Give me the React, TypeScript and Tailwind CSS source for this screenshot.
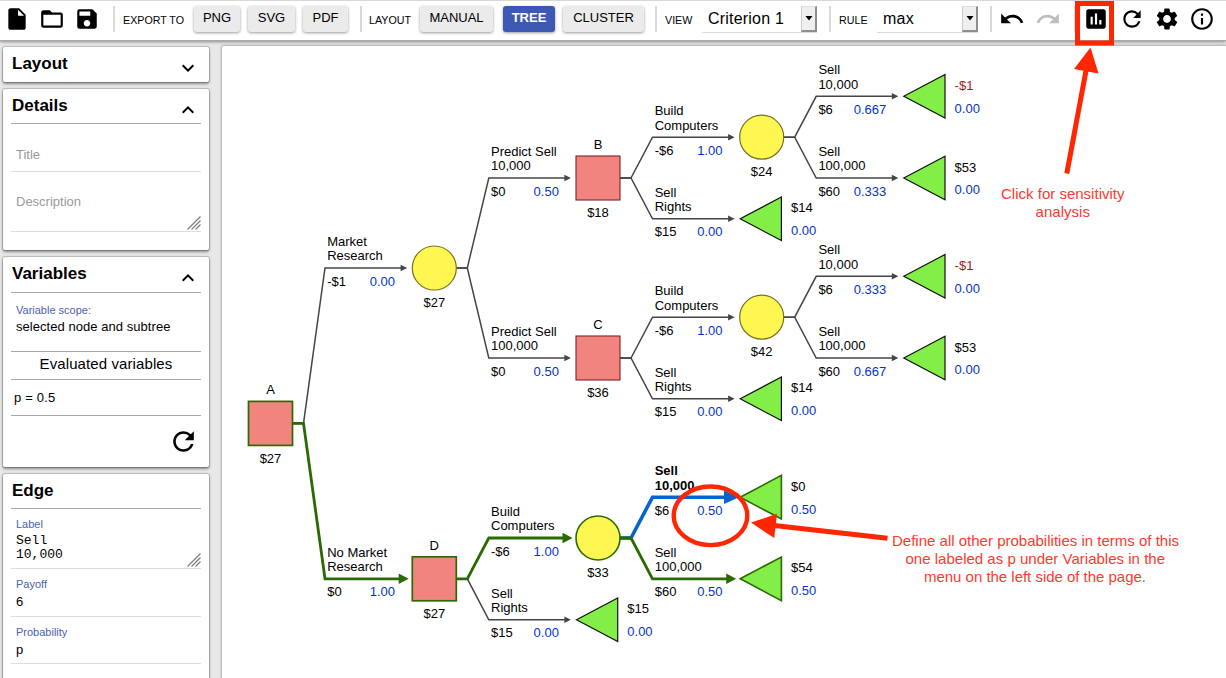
import type { ReactNode } from "react";
import {
  MdAssessment,
  MdExpandLess,
  MdExpandMore,
  MdInfoOutline,
  MdInsertDriveFile,
  MdFolderOpen,
  MdRedo,
  MdRefresh,
  MdSave,
  MdSettings,
  MdUndo,
} from "react-icons/md";

const FONT = "font-['Liberation_Sans',Arial,sans-serif]";

/* ---------- Toolbar ---------- */

function Separator({ className }: { className: string }) {
  return <div className={`h-[26px] w-0.5 shrink-0 bg-[#d9d9d9] ${className}`} />;
}

function ToolLabel({ className, children }: { className: string; children: string }) {
  return (
    <span className={`shrink-0 pt-[3px] text-[10.7px] leading-none whitespace-nowrap ${className}`}>{children}</span>
  );
}

function ToolButton({ className, active, children }: { className: string; active?: boolean; children: string }) {
  return (
    <button
      className={`flex h-[26px] shrink-0 items-center justify-center rounded-[3px] pb-[3px] text-[13px] shadow-[0_1px_3px_rgba(0,0,0,0.4)] ${
        active ? "bg-[#3d59b3] font-bold text-white" : "bg-[#ebebeb] text-black"
      } ${className}`}
    >
      {children}
    </button>
  );
}

function Select({ className, children }: { className: string; children: string }) {
  return (
    <div className={`flex h-[27px] shrink-0 items-stretch justify-between border-b border-[#ddd] ${className}`}>
      <span className="pt-[3px] pl-1.5 text-[16px] leading-[20px] tracking-[0.2px] whitespace-nowrap">{children}</span>
      <span className="flex w-4 items-center justify-center border-t border-r-2 border-b-2 border-l border-t-[#ddd] border-r-[#8e8e8e] border-b-[#8e8e8e] border-l-[#ccc] bg-[#efefef]">
        <svg width="8" height="5" viewBox="0 0 8 5">
          <path d="M0.5 0h7L4 4.6z" fill="#000" />
        </svg>
      </span>
    </div>
  );
}

function Toolbar() {
  return (
    <header className="flex h-[41px] shrink-0 items-center border-t border-b border-t-[#d8d8d8] border-b-[#a9a9a9] bg-white pb-[3px] shadow-[0_1px_3px_rgba(0,0,0,0.4)]">
      <MdInsertDriveFile size={26} className="ml-1 shrink-0" />
      <MdFolderOpen size={26} className="ml-[9px] shrink-0" />
      <MdSave size={26} className="ml-[9px] shrink-0" />
      <Separator className="ml-[13px]" />
      <ToolLabel className="ml-2 w-[63px]">EXPORT TO</ToolLabel>
      <ToolButton className="ml-2 w-[46px]">PNG</ToolButton>
      <ToolButton className="ml-2 w-[47px]">SVG</ToolButton>
      <ToolButton className="ml-2 w-[45px]">PDF</ToolButton>
      <Separator className="ml-3" />
      <ToolLabel className="ml-[7px] w-11">LAYOUT</ToolLabel>
      <ToolButton className="ml-[7px] w-[73px]">MANUAL</ToolButton>
      <ToolButton className="ml-2.5 w-[52px]" active>
        TREE
      </ToolButton>
      <ToolButton className="ml-2 w-[81px]">CLUSTER</ToolButton>
      <Separator className="ml-[11px]" />
      <ToolLabel className="ml-2 w-[29px]">VIEW</ToolLabel>
      <Select className="ml-2 w-[115px]">Criterion 1</Select>
      <Separator className="ml-3" />
      <ToolLabel className="ml-2 w-[30px]">RULE</ToolLabel>
      <Select className="ml-2 w-[101px]">max</Select>
      <Separator className="ml-3" />
      <MdUndo size={26} className="ml-[7px] shrink-0" />
      <MdRedo size={26} className="ml-2.5 shrink-0 text-[#bdbdbd]" />
      <Separator className="ml-[13px]" />
      <MdAssessment size={26} className="ml-[7px] shrink-0" />
      <MdRefresh size={26} className="ml-2.5 shrink-0" />
      <MdSettings size={26} className="ml-[9px] shrink-0" />
      <MdInfoOutline size={26} className="ml-[9px] shrink-0" />
    </header>
  );
}

/* ---------- Sidebar ---------- */

function Card({ className, children }: { className: string; children: ReactNode }) {
  return (
    <section
      className={`w-[206px] shrink-0 rounded-[2px] bg-white px-2 shadow-[0_0_1px_1px_rgba(0,0,0,0.2),0_2px_3px_rgba(0,0,0,0.4)] ${className}`}
    >
      {children}
    </section>
  );
}

function CardTitle({
  icon,
  className = "h-[35px] border-b",
  children,
}: {
  icon?: ReactNode;
  className?: string;
  children: string;
}) {
  return (
    <div className={`flex justify-between border-[#aaa] ${className}`}>
      <h2 className="pt-1.5 pl-px text-[17px] leading-[22px] font-bold">{children}</h2>
      {icon && <span className="pt-[9px] pr-px">{icon}</span>}
    </div>
  );
}

function Grip() {
  return (
    <svg width="14" height="14" viewBox="0 0 14 14" className="mb-px shrink-0" stroke="#777" strokeWidth="1.1">
      <path d="M0.5 13.5L13.5 0.5M4.5 13.5L13.5 4.5M8.5 13.5L13.5 8.5" fill="none" />
    </svg>
  );
}

function Sidebar() {
  return (
    <aside className="flex w-[222px] shrink-0 flex-col gap-[7px] overflow-hidden pt-1.5 pl-[3px]">
      <Card className="h-[35px]">
        <CardTitle className="h-[35px]" icon={<MdExpandMore size={24} />}>
          Layout
        </CardTitle>
      </Card>

      <Card className="h-[161px]">
        <CardTitle icon={<MdExpandLess size={24} />}>Details</CardTitle>
        <div className="h-12 border-b border-[#ddd] pt-[22px] pl-[5px] text-[13px] leading-[18px] text-[#999]">Title</div>
        <div className="flex h-[60px] items-end justify-between border-b border-[#ddd] pl-[5px] text-[13px] text-[#999]">
          <span className="self-start pt-[21px] leading-[18px]">Description</span>
          <Grip />
        </div>
      </Card>

      <Card className="h-[210px]">
        <CardTitle className="h-9 border-b" icon={<MdExpandLess size={24} />}>
          Variables
        </CardTitle>
        <div className="h-[59px] border-b border-[#aaa] pt-2.5 pl-[5px]">
          <div className="text-[11px] leading-[15px] text-[#4a62ad]">Variable scope:</div>
          <div className="text-[13px] leading-[18px] tracking-[0.05px] whitespace-nowrap">selected node and subtree</div>
        </div>
        <div className="h-7 border-b border-[#aaa] text-center text-[15px] leading-[23px] tracking-[0.1px]">
          Evaluated variables
        </div>
        <div className="h-9 border-b border-[#aaa] pl-[3px] text-[13px] leading-[36px] tracking-[0.2px]">p = 0.5</div>
        <div className="flex justify-end pt-2.5 pr-[2px]">
          <MdRefresh size={31} />
        </div>
      </Card>

      <Card className="h-[230px]">
        <CardTitle>Edge</CardTitle>
        <div className="flex h-[60px] items-end justify-between border-b border-[#ddd] pl-[5px]">
          <div className="self-start pt-[7px]">
            <div className="text-[11px] leading-[16px] text-[#4a62ad]">Label</div>
            <div className="pt-0.5 font-['Liberation_Mono',monospace] text-[13px] leading-[14px]">
              Sell
              <br />
              10,000
            </div>
          </div>
          <Grip />
        </div>
        <div className="h-12 border-b border-[#ddd] pt-[7px] pl-[5px]">
          <div className="text-[11px] leading-[16px] text-[#4a62ad]">Payoff</div>
          <div className="text-[13px] leading-[20px]">6</div>
        </div>
        <div className="h-[47px] border-b border-[#ddd] pt-[7px] pl-[5px]">
          <div className="text-[11px] leading-[16px] text-[#4a62ad]">Probability</div>
          <div className="text-[13px] leading-[20px]">p</div>
        </div>
      </Card>
    </aside>
  );
}

/* ---------- Decision tree ---------- */

type Kind = "decision" | "chance" | "terminal";
type TreeNode = { kind: Kind; x: number; y: number; name?: string; value: string; prob?: string; best?: boolean };
type Edge = {
  from: [number, number];
  y: number;
  label: [string, string];
  payoff: string;
  prob: string;
  tone?: "best" | "selected";
};

const COL = [270.5, 434.3, 598, 761.7, 925.3];

const nodes: TreeNode[] = [
  { kind: "decision", x: COL[0], y: 423.4, name: "A", value: "$27", best: true },
  { kind: "chance", x: COL[1], y: 268, value: "$27" },
  { kind: "decision", x: COL[2], y: 178, name: "B", value: "$18" },
  { kind: "decision", x: COL[2], y: 358, name: "C", value: "$36" },
  { kind: "decision", x: COL[1], y: 578.8, name: "D", value: "$27", best: true },
  { kind: "chance", x: COL[3], y: 137.2, value: "$24" },
  { kind: "chance", x: COL[3], y: 317.2, value: "$42" },
  { kind: "chance", x: COL[2], y: 538, value: "$33", best: true },
  { kind: "terminal", x: COL[4], y: 96.3, value: "-$1", prob: "0.00" },
  { kind: "terminal", x: COL[4], y: 178, value: "$53", prob: "0.00" },
  { kind: "terminal", x: COL[3], y: 218.8, value: "$14", prob: "0.00" },
  { kind: "terminal", x: COL[4], y: 276.3, value: "-$1", prob: "0.00" },
  { kind: "terminal", x: COL[4], y: 358, value: "$53", prob: "0.00" },
  { kind: "terminal", x: COL[3], y: 398.8, value: "$14", prob: "0.00" },
  { kind: "terminal", x: COL[3], y: 497.2, value: "$0", prob: "0.50", best: true },
  { kind: "terminal", x: COL[3], y: 578.8, value: "$54", prob: "0.50", best: true },
  { kind: "terminal", x: COL[2], y: 619.8, value: "$15", prob: "0.00" },
];

const edges: Edge[] = [
  { from: [COL[0], 423.4], y: 268, label: ["Market", "Research"], payoff: "-$1", prob: "0.00" },
  { from: [COL[0], 423.4], y: 578.8, label: ["No Market", "Research"], payoff: "$0", prob: "1.00", tone: "best" },
  { from: [COL[1], 268], y: 178, label: ["Predict Sell", "10,000"], payoff: "$0", prob: "0.50" },
  { from: [COL[1], 268], y: 358, label: ["Predict Sell", "100,000"], payoff: "$0", prob: "0.50" },
  { from: [COL[2], 178], y: 137.2, label: ["Build", "Computers"], payoff: "-$6", prob: "1.00" },
  { from: [COL[2], 178], y: 218.8, label: ["Sell", "Rights"], payoff: "$15", prob: "0.00" },
  { from: [COL[2], 358], y: 317.2, label: ["Build", "Computers"], payoff: "-$6", prob: "1.00" },
  { from: [COL[2], 358], y: 398.8, label: ["Sell", "Rights"], payoff: "$15", prob: "0.00" },
  { from: [COL[3], 137.2], y: 96.3, label: ["Sell", "10,000"], payoff: "$6", prob: "0.667" },
  { from: [COL[3], 137.2], y: 178, label: ["Sell", "100,000"], payoff: "$60", prob: "0.333" },
  { from: [COL[3], 317.2], y: 276.3, label: ["Sell", "10,000"], payoff: "$6", prob: "0.333" },
  { from: [COL[3], 317.2], y: 358, label: ["Sell", "100,000"], payoff: "$60", prob: "0.667" },
  { from: [COL[1], 578.8], y: 619.8, label: ["Sell", "Rights"], payoff: "$15", prob: "0.00" },
  { from: [COL[1], 578.8], y: 538, label: ["Build", "Computers"], payoff: "-$6", prob: "1.00", tone: "best" },
  { from: [COL[2], 538], y: 497.2, label: ["Sell", "10,000"], payoff: "$6", prob: "0.50", tone: "selected" },
  { from: [COL[2], 538], y: 578.8, label: ["Sell", "100,000"], payoff: "$60", prob: "0.50", tone: "best" },
];

const TONES = {
  normal: { color: "#454545", width: 1.5, tip: 136.6, length: 6.5, half: 3.2 },
  best: { color: "#2b6a03", width: 2.8, tip: 138.2, length: 10, half: 5.2 },
  selected: { color: "#0664cc", width: 3.6, tip: 141, length: 15, half: 6.8 },
};

function EdgeShape({ edge }: { edge: Edge }) {
  const [x, y0] = edge.from;
  const y = edge.y;
  const t = TONES[edge.tone ?? "normal"];
  const end = x + t.tip;
  const tx = x + 56.7;
  return (
    <g>
      <path
        d={`M${x + 22} ${y0}H${x + 33}L${x + 54.5} ${y}H${end - t.length + 1}`}
        fill="none"
        stroke={t.color}
        strokeWidth={t.width}
      />
      <path d={`M${end} ${y}l${-t.length} ${-t.half}v${t.half * 2}z`} fill={t.color} />
      <g fontWeight={edge.tone === "selected" ? 700 : 400}>
        <text x={tx} y={Math.round(y - 22)}>{edge.label[0]}</text>
        <text x={tx} y={Math.round(y - 7.6)}>{edge.label[1]}</text>
      </g>
      <text x={tx} y={Math.round(y + 17.6)}>{edge.payoff}</text>
      <text x={x + 124.6} y={Math.round(y + 17.6)} textAnchor="end" fill="#0433cc">
        {edge.prob}
      </text>
    </g>
  );
}

function NodeShape({ node }: { node: TreeNode }) {
  const { x, y, kind, best } = node;
  if (kind === "terminal") {
    return (
      <g>
        <path
          d={`M${x - 21.5} ${y}L${x + 19.7} ${y - 21.8}V${y + 21.8}z`}
          fill="#83ee47"
          stroke={best ? "#2b6a03" : "#111"}
          strokeWidth={best ? 1.6 : 1.2}
        />
        <text x={x + 29.3} y={Math.round(y - 6.4)} fill={node.value.startsWith("-") ? "#a01c1c" : "#000"}>
          {node.value}
        </text>
        <text x={x + 29.3} y={Math.round(y + 16.4)} fill="#0433cc">
          {node.prob}
        </text>
      </g>
    );
  }
  return (
    <g textAnchor="middle">
      {kind === "decision" ? (
        <rect
          x={x - 22}
          y={y - 22}
          width="44"
          height="44"
          fill="#f1847e"
          stroke={best ? "#2b6a03" : "#7d2424"}
          strokeWidth={best ? 1.7 : 1.1}
        />
      ) : (
        <circle
          cx={x}
          cy={y}
          r="22"
          fill="#fef752"
          stroke={best ? "#2b6a03" : "#777221"}
          strokeWidth={best ? 1.6 : 1.2}
        />
      )}
      {node.name && <text x={x} y={Math.round(y - 29)}>{node.name}</text>}
      <text x={x} y={Math.round(y + 39.2)}>{node.value}</text>
    </g>
  );
}

function Tree() {
  return (
    <svg width="1004" height="632" viewBox="222 46 1004 632" fontSize="13" className="block">
      {edges.map((e, i) => (
        <EdgeShape key={i} edge={e} />
      ))}
      {nodes.map((n, i) => (
        <NodeShape key={i} node={n} />
      ))}
    </svg>
  );
}

/* ---------- Annotations drawn over the page ---------- */

const notes = [
  { x: 1001, y: 199, w: 123.5, text: "Click for sensitivity" },
  { x: 1035.5, y: 217, w: 54.5, text: "analysis" },
  { x: 892, y: 546, w: 287, text: "Define all other probabilities in terms of this" },
  { x: 905.5, y: 564, w: 259.5, text: "one labeled as p under Variables in the" },
  { x: 924, y: 582, w: 222, text: "menu on the left side of the page." },
];

function Annotations() {
  return (
    <svg className="pointer-events-none absolute inset-0" width="1226" height="678" viewBox="0 0 1226 678">
      <g fill="none" stroke="#ff2600">
        <rect x="1077.5" y="3.5" width="34" height="39.5" strokeWidth="5" />
        <path d="M1066.8 173.5L1086.5 68" strokeWidth="5" />
        <path d="M887.5 538.3L772 525.3" strokeWidth="5" />
        <ellipse cx="710.5" cy="515.8" rx="36.8" ry="29.3" strokeWidth="4.4" />
      </g>
      <path d="M1090.5 47.5L1074 69L1098.5 73.5z" fill="#ff2600" />
      <path d="M751 522.6L777 513.8L774.2 538z" fill="#ff2600" />
      <g fill="#fb3a30" fontSize="15">
        {notes.map((n) => (
          <text key={n.text} x={n.x} y={n.y} textLength={n.w}>
            {n.text}
          </text>
        ))}
      </g>
    </svg>
  );
}

export default function App() {
  return (
    <div className={`relative flex h-[678px] w-[1226px] flex-col overflow-hidden bg-[#e8e8e8] text-black ${FONT}`}>
      <Toolbar />
      <div className="flex min-h-0 flex-1">
        <Sidebar />
        <main className="mt-[5px] w-[1004px] overflow-hidden rounded-tl-[2px] bg-white shadow-[0_0_2px_1px_rgba(0,0,0,0.25)]">
          <Tree />
        </main>
      </div>
      <Annotations />
    </div>
  );
}
